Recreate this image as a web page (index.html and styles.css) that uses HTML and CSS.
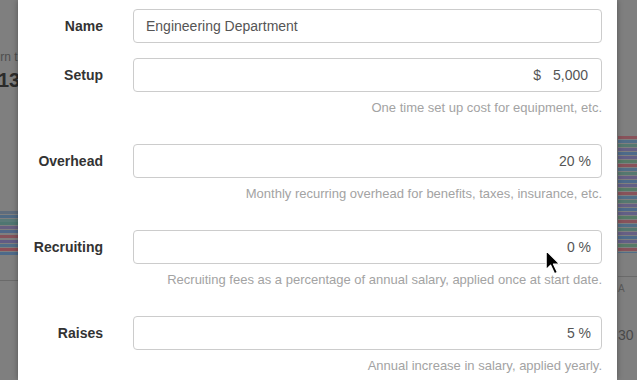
FILE: index.html
```html
<!DOCTYPE html>
<html>
<head>
<meta charset="utf-8">
<link rel="stylesheet" href="styles.css">
</head>
<body>
<div class="page">
  <div class="side side-left">
    <div class="bg-text">Return this</div>
    <div class="bg-num">13</div>
    <div class="stripes stripes-left"></div>
    <div class="bg-rule"></div>
  </div>
  <div class="side side-right">
    <div class="stripes stripes-right"></div>
    <div class="bg-rule"></div>
    <div class="bg-small">A</div>
    <div class="bg-val">30</div>
  </div>
</div>

<div class="modal">
  <form class="form">
    <div class="group">
      <label class="label">Name</label>
      <div class="field">
        <div class="input">Engineering Department</div>
      </div>
    </div>
    <div class="group">
      <label class="label">Setup</label>
      <div class="field">
        <div class="input right money"><span class="cur">$</span>5,000</div>
        <p class="help">One time set up cost for equipment, etc.</p>
      </div>
    </div>
    <div class="group">
      <label class="label">Overhead</label>
      <div class="field">
        <div class="input right pct">20 %</div>
        <p class="help">Monthly recurring overhead for benefits, taxes, insurance, etc.</p>
      </div>
    </div>
    <div class="group">
      <label class="label">Recruiting</label>
      <div class="field">
        <div class="input right pct">0 %</div>
        <p class="help">Recruiting fees as a percentage of annual salary, applied once at start date.</p>
      </div>
    </div>
    <div class="group">
      <label class="label">Raises</label>
      <div class="field">
        <div class="input right pct">5 %</div>
        <p class="help">Annual increase in salary, applied yearly.</p>
      </div>
    </div>
  </form>
</div>

<svg class="cursor" width="18" height="28" viewBox="0 0 16 24">
  <path d="M1 1 L1 18 L5 14 L8.5 21.5 L11 20.3 L7.6 13 L13 13 Z" fill="#000" stroke="#fff" stroke-width="1.1" stroke-linejoin="round"/>
</svg>
</body>
</html>
```

FILE: styles.css
```css
html, body {
  margin: 0;
  padding: 0;
}
body {
  width: 637px;
  height: 380px;
  overflow: hidden;
  background: #7f7f7f;
  font-family: "Liberation Sans", Arial, Helvetica, sans-serif;
  position: relative;
}
.page {
  display: flex;
  justify-content: space-between;
  height: 380px;
}
.side {
  display: flex;
  flex-direction: column;
}
.side-left {
  width: 19px;
  padding-top: 50px;
  box-sizing: border-box;
}
.side-right {
  width: 19px;
}
.bg-text {
  font-size: 12px;
  line-height: 14px;
  color: #4e4e4e;
  white-space: nowrap;
  margin-left: -25px;
}
.bg-num {
  font-size: 20px;
  font-weight: bold;
  line-height: 22px;
  color: #2b2b2b;
  margin-top: 5px;
  margin-left: -2px;
  white-space: nowrap;
}
.stripes {
  height: 46px;
  width: 19px;
}
.stripes-left {
  margin-top: 120px;
  background: linear-gradient(to bottom,
    #5f6c7c 0 3px, #7f7f7f 3px 4px,
    #4f6a84 4px 7px, #7f7f7f 7px 8px,
    #5a7a78 8px 11px, #4f7671 11px 14px, #7f7f7f 14px 15px,
    #675f80 15px 18px, #7f7f7f 18px 19px,
    #4f6788 19px 22px, #7f7f7f 22px 24px,
    #86525a 24px 27px, #7f7f7f 27px 29px,
    #625b84 29px 32px, #7f7f7f 32px 33px,
    #516e88 33px 36px, #7f7f7f 36px 37px,
    #8e4e56 37px 40px, #7f7f7f 40px 41px,
    #4d6a8a 41px 44px, #7f7f7f 44px 46px);
}
.stripes-right {
  height: 117px;
  margin-top: 136px;
  background: repeating-linear-gradient(to bottom,
    #88525a 0 3px, #7f7f7f 3px 4px,
    #516e88 4px 7px, #7f7f7f 7px 8px,
    #55786f 8px 11px, #7f7f7f 11px 12px,
    #665f84 12px 15px, #7f7f7f 15px 16px,
    #4d6a8a 16px 19px, #7f7f7f 19px 20px,
    #625f86 20px 23px, #7f7f7f 23px 24px,
    #567a66 24px 27px, #7f7f7f 27px 28px);
}
.bg-rule {
  height: 1px;
  width: 19px;
  background: #6a6a6a;
  margin-top: 23px;
}
.bg-small {
  font-size: 10px;
  color: #5a5a5a;
  margin-top: 6px;
  line-height: 12px;
}
.bg-val {
  font-size: 14px;
  color: #4a4a4a;
  margin-top: 32px;
  line-height: 16px;
}

.modal {
  position: absolute;
  left: 18px;
  top: 0;
  width: 599px;
  height: 380px;
  background: #fff;
  box-shadow: 0 0 6px rgba(0, 0, 0, 0.35);
  box-sizing: border-box;
  padding-top: 9px;
}
.form {
  margin: 0;
  display: flex;
  flex-direction: column;
  gap: 15px;
}
.group {
  display: grid;
  grid-template-columns: 100px 1fr;
  align-items: start;
}
.label {
  height: 34px;
  line-height: 34px;
  text-align: right;
  padding-right: 15px;
  font-size: 14px;
  font-weight: bold;
  color: #333;
}
.field {
  padding: 0 15px;
}
.input {
  height: 34px;
  box-sizing: border-box;
  border: 1px solid #cccccc;
  border-radius: 4px;
  padding: 0 12px;
  line-height: 32px;
  font-size: 14px;
  color: #555;
}
.right {
  text-align: right;
}
.money {
  padding-right: 13px;
}
.pct {
  padding-right: 10px;
}
.cur {
  margin-right: 12px;
}
.help {
  margin: 6px 0 11px;
  line-height: 20px;
  font-size: 13px;
  color: #a3a3a3;
  text-align: right;
}
.cursor {
  position: absolute;
  left: 545px;
  top: 249px;
}
```
